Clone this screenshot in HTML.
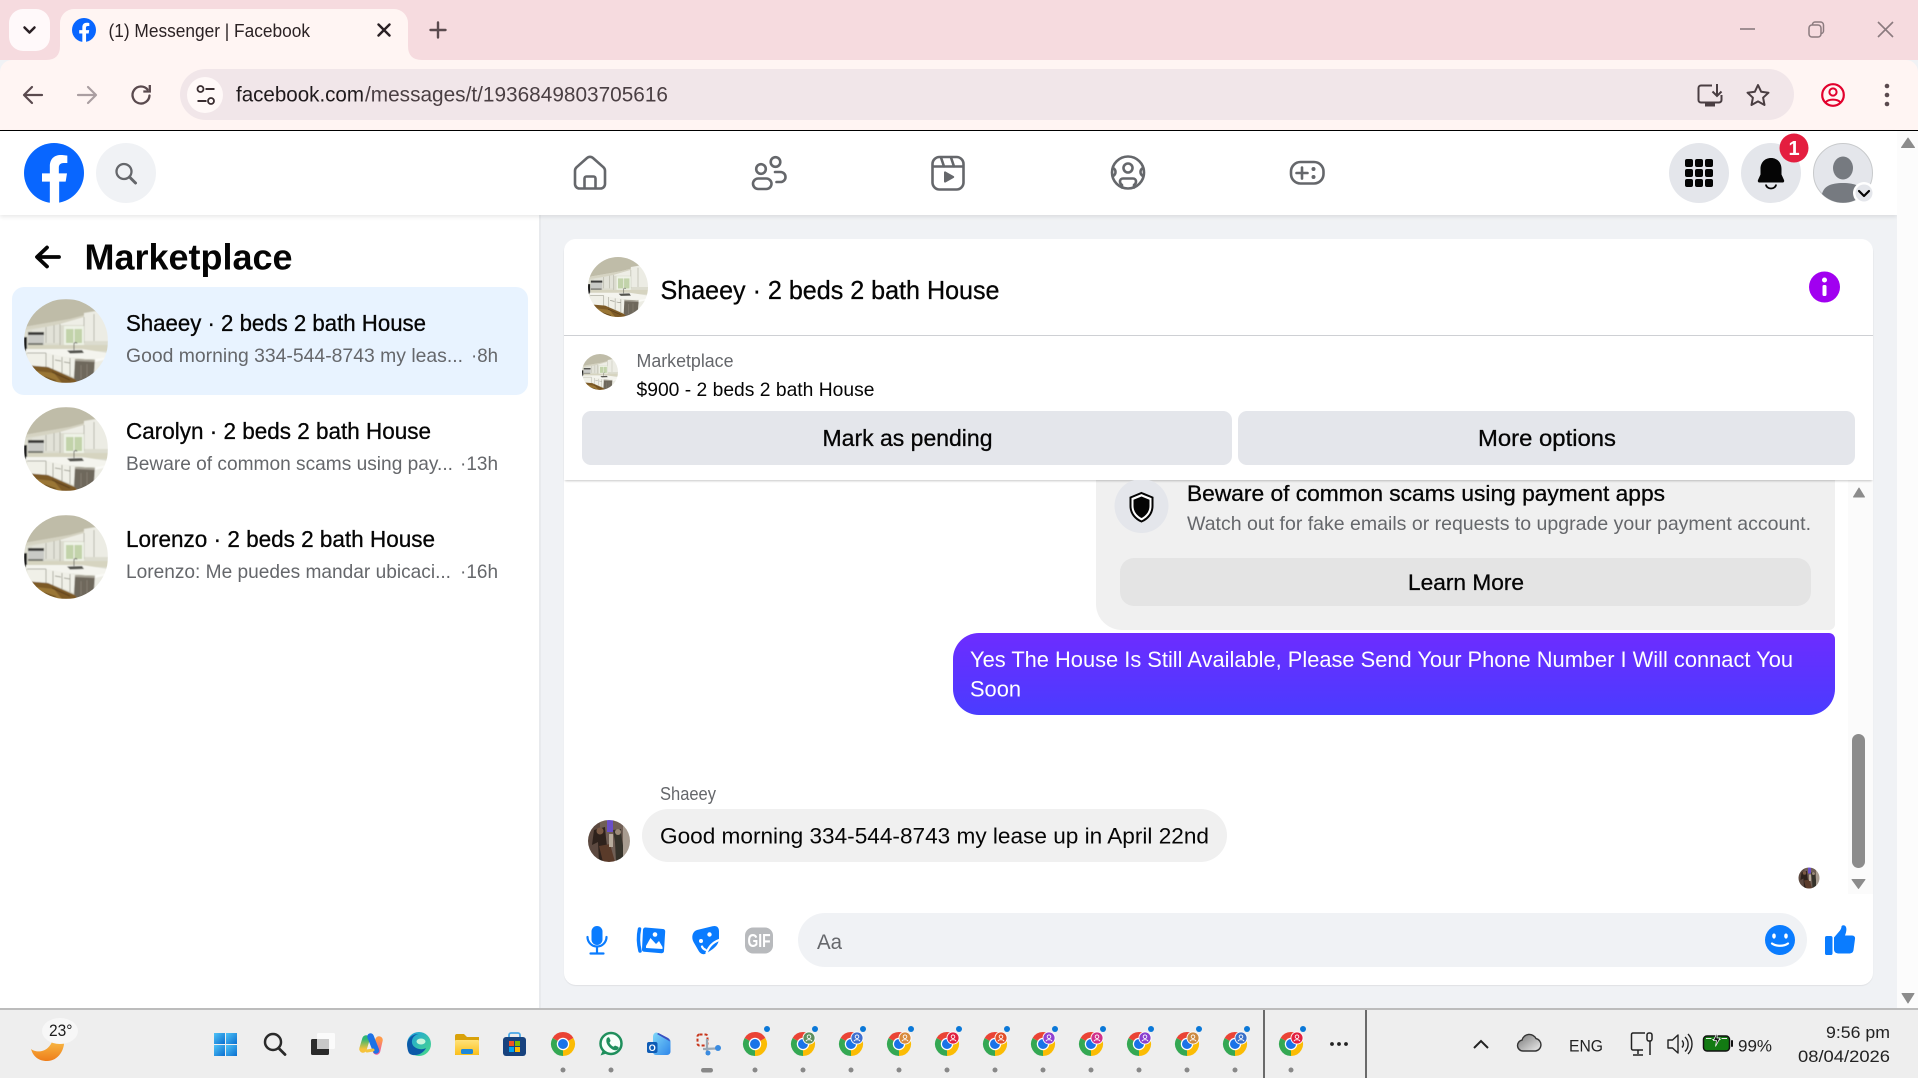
<!DOCTYPE html>
<html lang="en">
<head>
<meta charset="utf-8">
<title>(1) Messenger | Facebook</title>
<style>
html,body{margin:0;padding:0;width:1918px;height:1078px;overflow:hidden;background:#f0f2f5;font-family:"Liberation Sans",sans-serif}
div,header,aside,main,nav,footer{position:absolute;box-sizing:border-box}
#tabstrip{left:0;top:0;width:1918px;height:60px;background:#f6dbdf}
#toolbar{left:0;top:60px;width:1918px;height:70px;background:#fff5f3;border-radius:12px 12px 0 0}
#address{left:180px;top:69px;width:1614px;height:51px;background:#f1e6e9;border-radius:26px}
#blackline{left:0;top:130px;width:1918px;height:1px;background:#000}
#fbbar{left:0;top:131px;width:1897px;height:84px;background:#fff;box-shadow:0 2px 4px rgba(0,0,0,.09);z-index:3}
#sidebar{left:0;top:215px;width:541px;height:793px;background:#fff;border-right:2px solid #e8eaed}
#row1{left:12px;top:287px;width:516px;height:108px;background:#e8f3ff;border-radius:12px}
#pagescroll{left:1897px;top:131px;width:21px;height:877px;background:#fcfcfc;z-index:4}
#card{left:564px;top:239px;width:1309px;height:746px;background:#fff;border-radius:12px;box-shadow:0 1px 1px rgba(0,0,0,.07)}
#threadhead{left:564px;top:239px;width:1309px;height:241px;background:#fff;border-radius:12px 12px 0 0;box-shadow:0 2px 2px -1px rgba(0,0,0,.22);z-index:2}
#divider{left:564px;top:335px;width:1309px;height:1px;background:#ced0d4;z-index:3}
.btn{background:#e4e6eb;border-radius:9px;height:54px;top:411px;z-index:3}
#scam{left:1096px;top:480px;width:739px;height:150px;background:#f0f0f0;border-radius:0 0 6px 26px}
#learn{left:1120px;top:558px;width:691px;height:48px;background:#e4e4e4;border-radius:14px}
#mine{left:953px;top:633px;width:882px;height:82px;background:linear-gradient(#6d2cff,#4a3cff);border-radius:26px 6px 26px 26px}
#theirs{left:642px;top:809px;width:585px;height:53px;background:#f0f0f0;border-radius:27px}
#innerscroll{left:1848px;top:480px;width:25px;height:414px;background:#fbfbfb}
#thumb{left:1852px;top:734px;width:13px;height:134px;background:#8c8c8c;border-radius:7px}
#compose{left:798px;top:913px;width:1009px;height:54px;background:#f0f2f5;border-radius:27px}
#taskbar{left:0;top:1008px;width:1918px;height:70px;background:#eeeeee;border-top:2px solid #bcbcbc;z-index:4}
#overlay{position:absolute;left:0;top:0;z-index:5}
</style>
</head>
<body>
<div id="tabstrip"></div>
<div id="toolbar"></div>
<div id="address"></div>
<div id="blackline"></div>
<header id="fbbar"></header>
<aside id="sidebar"></aside>
<div id="row1"></div>
<div id="pagescroll"></div>
<main id="card"></main>
<div id="scam"></div>
<div id="learn"></div>
<div id="mine"></div>
<div id="theirs"></div>
<div id="innerscroll"></div>
<div id="thumb"></div>
<div id="compose"></div>
<div id="threadhead"></div>
<div id="divider"></div>
<div class="btn" style="left:582px;width:650px"></div>
<div class="btn" style="left:1238px;width:617px"></div>
<footer id="taskbar"></footer>

<svg id="overlay" width="1918" height="1078" viewBox="0 0 1918 1078" xmlns="http://www.w3.org/2000/svg" font-family="'Liberation Sans',sans-serif">
<defs>
  <linearGradient id="gWin" x1="0" y1="0" x2="1" y2="1"><stop offset="0" stop-color="#4fc3f7"/><stop offset="1" stop-color="#0a6fd0"/></linearGradient>
  <linearGradient id="gSun" x1="0" y1="0" x2="0" y2="1"><stop offset="0" stop-color="#fbc84f"/><stop offset="1" stop-color="#ee7d1a"/></linearGradient>
  <linearGradient id="gFold" x1="0" y1="0" x2="0" y2="1"><stop offset="0" stop-color="#ffe27a"/><stop offset="1" stop-color="#fbbf1a"/></linearGradient>
  <linearGradient id="gEdge" x1="0" y1="0" x2="1" y2="1"><stop offset="0" stop-color="#1b9de2"/><stop offset="1" stop-color="#4bdc86"/></linearGradient>
  <linearGradient id="gCloud" x1="0" y1="0" x2="1" y2="1"><stop offset="0" stop-color="#777"/><stop offset="1" stop-color="#eee"/></linearGradient>
  <linearGradient id="gOut" x1="0" y1="0" x2="1" y2="1"><stop offset="0" stop-color="#7fd8f8"/><stop offset="1" stop-color="#2f86ea"/></linearGradient>
  <linearGradient id="gCopL" x1="0" y1="0" x2="0" y2="1"><stop offset="0" stop-color="#2fb673"/><stop offset="1" stop-color="#f6c23a"/></linearGradient>
  <linearGradient id="gCopR" x1="0" y1="0" x2="0" y2="1"><stop offset="0" stop-color="#ff9a4a"/><stop offset="1" stop-color="#ee5f9a"/></linearGradient>
  <filter id="b1" x="-5%" y="-5%" width="110%" height="110%"><feGaussianBlur stdDeviation=".45"/></filter>
  <clipPath id="c84"><circle cx="42" cy="42" r="42"/></clipPath>
  <clipPath id="cShield"><rect x="1100" y="480" width="100" height="70"/></clipPath>

  <symbol id="kitchen" viewBox="0 0 84 84" overflow="hidden">
    <g clip-path="url(#c84)"><g filter="url(#b1)">
      <rect width="84" height="84" fill="#dcdccf"/>
      <!-- ceiling -->
      <path d="M0 0H84V10L46 20L0 28Z" fill="#bfbca8"/>
      <path d="M0 28L46 20L84 10V14L46 24L0 31Z" fill="#d5d3c2"/>
      <!-- upper cabinets -->
      <path d="M8 31L36 25V44H8Z" fill="#e2e2d8"/>
      <path d="M60 14L84 10V42H60Z" fill="#ecece4"/>
      <path d="M36 25L60 18V26H36Z" fill="#eeeee6"/>
      <path d="M22 28V44M30 26V44M36 25V46M60 18V44M70 15V42" stroke="#b5b5a8" stroke-width=".9"/>
      <!-- window -->
      <rect x="40" y="27" width="20" height="19" fill="#eef2e6"/>
      <path d="M42 30h16v14h-16Z" fill="#c2d3aa"/>
      <path d="M50 28v18" stroke="#f2f2ea" stroke-width="1"/>
      <!-- hood + range -->
      <rect x="4" y="33" width="16" height="3" fill="#3c3c3a"/>
      <rect x="4" y="36" width="16" height="10" fill="#c9cac6"/>
      <rect x="4" y="44" width="15" height="2" fill="#77776f"/>
      <rect x="0" y="38" width="3" height="14" fill="#1c1c1c"/>
      <!-- backsplash / counter -->
      <path d="M4 46H84V52H60L4 50Z" fill="#d6d4c0"/>
      <path d="M2 50L58 50L84 54V60L62 60L2 54Z" fill="#f4f4ee"/>
      <path d="M43 51.500L58 51L60 54L46 54.500Z" fill="#55554f"/>
      <path d="M50 51V44.500q2-2 3 0" fill="none" stroke="#6a6a64" stroke-width=".9"/>
      <!-- lower cabinets -->
      <path d="M3 54L22 54L54 60L50 78L24 68L3 68Z" fill="#f0f0e8"/>
      <path d="M3 54H22" stroke="#9c9c90" stroke-width=".8"/>
      <path d="M22 54V68M29 56V71M38 58V74M46 59V77" stroke="#a8a89c" stroke-width=".9"/>
      <path d="M31 61L37 62M40 63L46 64" stroke="#88887c" stroke-width=".8"/>
      <!-- floor -->
      <path d="M0 66L24 68L60 84H0Z" fill="#7d5a28"/>
      <path d="M12 72L30 74L38 84H14Z" fill="#9a7636"/>
      <path d="M28 73L46 81M20 78L32 82" stroke="#5a3f1a" stroke-width="1"/>
      <!-- dishwasher -->
      <path d="M51 60L71 61L70 76L54 84L50 79Z" fill="#6e675c"/>
      <path d="M51 60L71 61L71 63L51 62Z" fill="#a8a498"/>
      <path d="M57 66V80M63 65V78" stroke="#8a8477" stroke-width=".8"/>
      <!-- right end -->
      <path d="M71 60L84 58V84H62L70 76Z" fill="#ecece4"/>
      <path d="M71 60L84 58V60L71 63Z" fill="#fafaf6"/>
    </g></g>
  </symbol>

  <symbol id="person" viewBox="0 0 84 84" overflow="hidden">
    <g clip-path="url(#c84)"><g filter="url(#b1)">
      <rect width="84" height="84" fill="#6f5f55"/>
      <rect x="0" y="0" width="24" height="84" fill="#5b4a40"/>
      <rect x="38" y="0" width="12" height="24" fill="#6a50c8"/>
      <path d="M12 20L34 14L36 36L42 84H22L20 44L8 50Z" fill="#2e211b"/>
      <path d="M22 52L44 48L54 84H30Z" fill="#5a3a2c"/>
      <path d="M50 20L66 18L68 40L76 84H56L54 44Z" fill="#36302a"/>
      <circle cx="24" cy="22" r="7" fill="#7a5a45"/>
      <circle cx="60" cy="24" r="6" fill="#9a8a78"/>
      <rect x="70" y="8" width="14" height="76" fill="#a89c90"/>
      <rect x="42" y="28" width="8" height="26" fill="#b8ac9c"/>
    </g></g>
  </symbol>

  <symbol id="fb" viewBox="0 0 36 36">
    <circle cx="18" cy="18" r="18" fill="#0866ff"/>
    <path d="M25 23.2l.8-5H20.9v-3.4c0-1.5.7-2.8 3-2.8h2.1V7.6s-1.9-.4-3.8-.4c-4.1 0-6.7 2.4-6.7 6.8v4.2h-4.7v5h4.7V36h5.6V23.2z" fill="#fff"/>
  </symbol>

  <g id="chrome">
    <path d="M0 0L-10.4 -6A12 12 0 0 1 10.4 -6Z" fill="#ea4335"/>
    <path d="M0 0L10.4 -6A12 12 0 0 1 0 12Z" fill="#fbbc04"/>
    <path d="M0 0L0 12A12 12 0 0 1 -10.4 -6Z" fill="#34a853"/>
    <circle r="6.200" fill="#fff"/><circle r="5" fill="#1a73e8"/>
  </g>
  <g id="pb">
    <circle r="6.5" fill="#fff"/><circle r="5.6" fill="currentColor"/>
    <circle cy="-1.3" r="1.8" fill="none" stroke="#fff" stroke-width=".9"/>
    <path d="M-3 3.2C-2.4 1.2 2.4 1.2 3 3.2" fill="none" stroke="#fff" stroke-width=".9"/>
  </g>
</defs>

<!-- browser tab strip -->
<rect x="9" y="9" width="41" height="42" rx="14" fill="#fff9fa"/>
<path d="M24.500 27.500l5 5 5-5" fill="none" stroke="#2a2024" stroke-width="2.500" stroke-linecap="round" stroke-linejoin="round"/>
<path d="M46 60q14 0 14-14V23a14 14 0 0 1 14-14H394a14 14 0 0 1 14 14V46q0 14 14 14Z" fill="#fff5f3"/>
<use href="#fb" x="72" y="18" width="24" height="24"/>
<text x="108.500" y="37" font-size="18" fill="#2b2224" textLength="201.500" lengthAdjust="spacingAndGlyphs">(1) Messenger | Facebook</text>
<path d="M378.500 24.500l11 11m0-11l-11 11" stroke="#2a2024" stroke-width="2.400" stroke-linecap="round"/>
<path d="M438 22.500v15m-7.500-7.500h15" stroke="#5a4a4e" stroke-width="2.400" stroke-linecap="round"/>
<path d="M1740 29h15" stroke="#8b7b7f" stroke-width="1.600"/>
<rect x="1809" y="25" width="12" height="12" rx="3" fill="none" stroke="#8b7b7f" stroke-width="1.500"/>
<path d="M1812.500 25v-.5a2.500 2.500 0 0 1 2.500-2.500h5.500a3 3 0 0 1 3 3v6a2.500 2.500 0 0 1-2.500 2.500" fill="none" stroke="#8b7b7f" stroke-width="1.500"/>
<path d="M1878 22l15 15m0-15l-15 15" stroke="#8b7b7f" stroke-width="1.600"/>

<!-- toolbar -->
<path d="M42 95H25m7-8l-8 8 8 8" fill="none" stroke="#5a4a4e" stroke-width="2.200" stroke-linecap="round" stroke-linejoin="round"/>
<path d="M78 95H95m-7-8l8 8-8 8" fill="none" stroke="#aa9ea1" stroke-width="2.200" stroke-linecap="round" stroke-linejoin="round"/>
<path d="M147.500 89.500a8.500 8.500 0 1 0 2 6" fill="none" stroke="#5a4a4e" stroke-width="2.300" stroke-linecap="round"/>
<path d="M149.800 85v6.500h-6.500" fill="none" stroke="#5a4a4e" stroke-width="2.300"/>
<circle cx="205" cy="95" r="18" fill="#fff9f8"/>
<circle cx="200.500" cy="89" r="3" fill="none" stroke="#3a2e31" stroke-width="1.800"/>
<path d="M205.500 89h9" stroke="#3a2e31" stroke-width="2"/>
<circle cx="211" cy="101" r="3" fill="none" stroke="#3a2e31" stroke-width="1.800"/>
<path d="M197.500 101h9" stroke="#3a2e31" stroke-width="2"/>
<text x="236" y="101.500" font-size="21" fill="#1f1a1c" textLength="128" lengthAdjust="spacingAndGlyphs">facebook.com</text>
<text x="365" y="101.500" font-size="21" fill="#4a3f43" textLength="303" lengthAdjust="spacingAndGlyphs">/messages/t/1936849803705616</text>
<path d="M1712 85.500h-11a2.500 2.500 0 0 0-2.500 2.500v12a2.500 2.500 0 0 0 2.500 2.500h18a2.500 2.500 0 0 0 2.500-2.500v-5" fill="none" stroke="#4a3e42" stroke-width="2"/>
<path d="M1705 105h10" stroke="#4a3e42" stroke-width="3"/>
<path d="M1717 84v12m-4.500-4.500l4.500 4.500 4.500-4.500" fill="none" stroke="#4a3e42" stroke-width="2"/>
<path d="M1758 85l3.200 6.800 7.300.9-5.400 5 1.400 7.300-6.500-3.600-6.500 3.600 1.400-7.300-5.400-5 7.300-.9Z" fill="none" stroke="#4a3e42" stroke-width="2" stroke-linejoin="round"/>
<circle cx="1833" cy="95" r="10.800" fill="none" stroke="#e2002c" stroke-width="2.200"/>
<circle cx="1833" cy="92" r="3.600" fill="none" stroke="#e2002c" stroke-width="2"/>
<path d="M1825.500 102.500c3-3.800 12-3.800 15 0" fill="none" stroke="#e2002c" stroke-width="2"/>
<circle cx="1887" cy="86" r="2.300" fill="#5a4a4e"/><circle cx="1887" cy="95" r="2.300" fill="#5a4a4e"/><circle cx="1887" cy="104" r="2.300" fill="#5a4a4e"/>

<!-- fb top bar -->
<use href="#fb" x="24" y="143" width="60" height="60"/>
<circle cx="126" cy="173" r="30" fill="#f0f2f5"/>
<circle cx="124" cy="171.500" r="7.500" fill="none" stroke="#65676b" stroke-width="2.300"/>
<path d="M129.500 177l6 6" stroke="#65676b" stroke-width="3" stroke-linecap="round"/>

<g fill="none" stroke="#65676b" stroke-width="2.600" stroke-linecap="round" stroke-linejoin="round">
  <path d="M587 158l-10.500 9.300a5 5 0 0 0-1.500 3.500V184a4.500 4.500 0 0 0 4.500 4.500h21a4.500 4.500 0 0 0 4.500-4.500v-13.200a5 5 0 0 0-1.500-3.500L593 158a4.500 4.500 0 0 0-6 0Z"/>
  <path d="M584.500 188v-9.500a2 2 0 0 1 2-2h7a2 2 0 0 1 2 2V188"/>
  <circle cx="761" cy="169" r="4.800"/>
  <rect x="753" y="178.500" width="18.500" height="10.500" rx="5.200"/>
  <circle cx="775.500" cy="162" r="4.800"/>
  <path d="M775 172h5.500a4.800 4.800 0 0 1 0 10h-4"/>
  <rect x="932.500" y="157" width="31" height="32.500" rx="7"/>
  <path d="M933 166.500h30M941 157.500l3 9M951 157.500l3 9"/>
  <circle cx="1128" cy="172.500" r="16"/>
  <circle cx="1128" cy="168" r="4.500"/>
  <path d="M1122 187.500v-2.500c-1.500-1-2-2-2-3.500 0-1.800 1.500-3 3-3h10c1.500 0 3 1.200 3 3 0 1.500-.5 2.500-2 3.500v2.500"/>
  <path d="M1113 168a4.500 4.500 0 0 1 2.500 4 4.500 4.500 0 0 1-2.500 4M1143 168a4.500 4.500 0 0 0-2.500 4 4.500 4.500 0 0 0 2.500 4"/>
  <rect x="1291" y="162" width="32.500" height="21.500" rx="9.500"/>
  <path d="M1302 167.500v11M1296.500 173h11"/>
</g>
<path d="M944 172.500c0-1 .9-1.400 1.700-.9l8 4.500c.7.400.7 1.400 0 1.800l-8 4.500c-.8.500-1.700 0-1.700-.9Z" fill="#65676b"/>
<circle cx="1313.500" cy="169" r="2" fill="#65676b"/><circle cx="1313.500" cy="177" r="2" fill="#65676b"/>

<circle cx="1699" cy="173" r="30" fill="#e4e6eb"/>
<g fill="#050505">
  <rect x="1685" y="159" width="8" height="8" rx="2"/><rect x="1695" y="159" width="8" height="8" rx="2"/><rect x="1705" y="159" width="8" height="8" rx="2"/>
  <rect x="1685" y="169" width="8" height="8" rx="2"/><rect x="1695" y="169" width="8" height="8" rx="2"/><rect x="1705" y="169" width="8" height="8" rx="2"/>
  <rect x="1685" y="179" width="8" height="8" rx="2"/><rect x="1695" y="179" width="8" height="8" rx="2"/><rect x="1705" y="179" width="8" height="8" rx="2"/>
</g>
<circle cx="1771" cy="173" r="30" fill="#e4e6eb"/>
<path d="M1771 158c-6.500 0-10.500 4.800-10.500 11v5.500l-2.500 5.500c-.6 1.500.2 2.500 1.700 2.500h22.600c1.500 0 2.300-1 1.700-2.500l-2.500-5.500V169c0-6.200-4-11-10.500-11Z" fill="#050505"/>
<path d="M1766 184.500a5 4 0 0 0 10 0" fill="none" stroke="#050505" stroke-width="1.800"/>
<circle cx="1794" cy="148" r="14.500" fill="#e41e3f"/>
<text x="1794" y="155" font-size="20" font-weight="bold" fill="#fff" text-anchor="middle">1</text>
<circle cx="1843" cy="173" r="29.500" fill="#e4e6eb" stroke="#c8cacc" stroke-width="1"/>
<ellipse cx="1843" cy="168" rx="10" ry="11.500" fill="#767a80"/>
<path d="M1822 194c2-8 9-11 21-11s19 3 21 11a29.500 29.500 0 0 1-42 0Z" fill="#767a80"/>
<circle cx="1864" cy="193" r="11" fill="#fff"/><circle cx="1864" cy="193" r="8.500" fill="#e4e6eb"/>
<path d="M1859 191l5 5 5-5" fill="none" stroke="#050505" stroke-width="2.200" stroke-linecap="round" stroke-linejoin="round"/>
<path d="M1908 138l6.500 9.500h-13Z" fill="#8c8c8c" stroke="#8c8c8c" stroke-linejoin="round"/>
<path d="M1908 1003l6-9.500h-12Z" fill="#8c8c8c" stroke="#8c8c8c" stroke-linejoin="round"/>

<!-- sidebar -->
<path d="M59 257H37.500M47 247.500L37 257l10 9.500" fill="none" stroke="#050505" stroke-width="3.800" stroke-linecap="round" stroke-linejoin="round"/>
<text x="84.500" y="269.500" font-size="36" font-weight="bold" fill="#050505" textLength="208" lengthAdjust="spacingAndGlyphs">Marketplace</text>

<use href="#kitchen" x="24" y="299" width="84" height="84"/>
<use href="#kitchen" x="24" y="407" width="84" height="84"/>
<use href="#kitchen" x="24" y="515" width="84" height="84"/>

<g fill="#050505" font-size="23" stroke="#050505" stroke-width=".3">
  <text x="126" y="331" textLength="300" lengthAdjust="spacingAndGlyphs">Shaeey · 2 beds 2 bath House</text>
  <text x="126" y="439" textLength="305" lengthAdjust="spacingAndGlyphs">Carolyn · 2 beds 2 bath House</text>
  <text x="126" y="547" textLength="309" lengthAdjust="spacingAndGlyphs">Lorenzo · 2 beds 2 bath House</text>
</g>
<g fill="#65676b" font-size="19.500">
  <text x="126" y="362" textLength="337" lengthAdjust="spacingAndGlyphs">Good morning 334-544-8743 my leas...</text>
  <text x="471" y="362" textLength="27" lengthAdjust="spacingAndGlyphs">·8h</text>
  <text x="126" y="470" textLength="327" lengthAdjust="spacingAndGlyphs">Beware of common scams using pay...</text>
  <text x="460" y="470" textLength="38" lengthAdjust="spacingAndGlyphs">·13h</text>
  <text x="126" y="578" textLength="325" lengthAdjust="spacingAndGlyphs">Lorenzo: Me puedes mandar ubicaci...</text>
  <text x="460" y="578" textLength="38" lengthAdjust="spacingAndGlyphs">·16h</text>
</g>

<!-- thread header -->
<use href="#kitchen" x="588" y="257" width="60" height="60"/>
<text x="660.500" y="299" font-size="26" fill="#050505" stroke="#050505" stroke-width=".3" textLength="339" lengthAdjust="spacingAndGlyphs">Shaeey · 2 beds 2 bath House</text>
<circle cx="1824.500" cy="287" r="15.500" fill="#a100f0"/>
<circle cx="1824.500" cy="280" r="2.500" fill="#fff"/>
<rect x="1822.500" y="285" width="4" height="11" rx="1.500" fill="#fff"/>
<use href="#kitchen" x="582" y="354" width="36" height="36"/>
<text x="636.500" y="367" font-size="18" fill="#65676b" textLength="97" lengthAdjust="spacingAndGlyphs">Marketplace</text>
<text x="636.500" y="396" font-size="19.500" fill="#050505" textLength="238" lengthAdjust="spacingAndGlyphs">$900 - 2 beds 2 bath House</text>
<text x="822.500" y="446" font-size="23" fill="#050505" stroke="#050505" stroke-width=".3" textLength="170" lengthAdjust="spacingAndGlyphs">Mark as pending</text>
<text x="1478" y="446" font-size="23" fill="#050505" stroke="#050505" stroke-width=".3" textLength="138" lengthAdjust="spacingAndGlyphs">More options</text>

<!-- scam notice -->
<circle cx="1141.500" cy="506" r="27" fill="#e4e6eb" clip-path="url(#cShield)"/>
<path d="M1141.500 493l11 4.500v8.500c0 7.500-5 13-11 15.500-6-2.500-11-8-11-15.500v-8.500Z" fill="#fff" stroke="#050505" stroke-width="2"/>
<path d="M1141.500 496.500l8 3.200v6.300c0 5.500-3.500 9.800-8 12-4.500-2.200-8-6.500-8-12v-6.300Z" fill="#050505"/>
<text x="1187" y="501" font-size="22.500" fill="#050505" stroke="#050505" stroke-width=".3" textLength="478" lengthAdjust="spacingAndGlyphs">Beware of common scams using payment apps</text>
<text x="1187" y="530" font-size="19.500" fill="#65676b" textLength="624" lengthAdjust="spacingAndGlyphs">Watch out for fake emails or requests to upgrade your payment account.</text>
<text x="1408" y="590" font-size="22.500" fill="#050505" stroke="#050505" stroke-width=".3" textLength="116" lengthAdjust="spacingAndGlyphs">Learn More</text>

<!-- messages -->
<text x="970" y="667" font-size="22.500" fill="#fff" textLength="823" lengthAdjust="spacingAndGlyphs">Yes The House Is Still Available, Please Send Your Phone Number I Will connact You</text>
<text x="970" y="696.500" font-size="22.500" fill="#fff" textLength="51" lengthAdjust="spacingAndGlyphs">Soon</text>
<text x="660" y="800" font-size="18" fill="#65676b" textLength="56" lengthAdjust="spacingAndGlyphs">Shaeey</text>
<use href="#person" x="588" y="820" width="42" height="42"/>
<text x="660" y="843.500" font-size="22.500" fill="#050505" textLength="549" lengthAdjust="spacingAndGlyphs">Good morning 334-544-8743 my lease up in April 22nd</text>
<use href="#person" x="1798.500" y="867.500" width="21" height="21"/>
<path d="M1859 488l5.500 9h-11Z" fill="#8c8c8c" stroke="#8c8c8c" stroke-linejoin="round"/>
<path d="M1858.500 888.500l6.500-9h-13Z" fill="#8c8c8c" stroke="#8c8c8c" stroke-linejoin="round"/>

<!-- composer -->
<rect x="591.500" y="926" width="11" height="19" rx="5.500" fill="#0a7cff"/>
<path d="M587.500 937a9.500 9.500 0 0 0 19 0M597 947v6M590.500 953.500h13" fill="none" stroke="#0a7cff" stroke-width="2.200" stroke-linecap="round"/>
<path d="M639.500 929c-1.500 7-1.500 14 .5 22" fill="none" stroke="#0a7cff" stroke-width="3.500" stroke-linecap="round"/>
<path d="M645.500 927.500l17.500 1.500c1.500.2 2.300 1.200 2.200 2.500l-1.200 19.500c-.1 1.500-1.200 2.300-2.500 2.200l-17.500-1.500c-1.300-.1-2.200-1.200-2-2.500l1-19.500c.1-1.300 1.200-2.300 2.500-2.200Z" fill="#0a7cff"/>
<circle cx="655" cy="934.500" r="2.300" fill="#fff"/>
<path d="M646 946l4.500-8 5.500 6 3-3 3.500 6v2L646 948Z" fill="#fff"/>
<path d="M697 930l15.500-3.800c4-1 6.500 1 6.500 5v7c0 5-3 8.500-6.500 11l-5.500 3.800c-3 2-6 1.500-8-1.500l-5.500-9.500c-2.500-5-1-10.500 3.500-12Z" fill="#0a7cff"/>
<circle cx="709.500" cy="934.500" r="2.200" fill="#fff"/>
<circle cx="701" cy="941" r="2" fill="#fff"/>
<path d="M702 946.500c.8 1.800 2 2.800 3.500 3.300M706.500 953c2-6 6-10.500 12.500-13" fill="none" stroke="#fff" stroke-width="2.200" stroke-linecap="round"/>
<rect x="745" y="927.500" width="28" height="26" rx="8" fill="#b8babd"/>
<text x="759" y="947" font-size="18" font-weight="bold" fill="#fff" text-anchor="middle" textLength="23" lengthAdjust="spacingAndGlyphs">GIF</text>
<text x="817" y="949" font-size="21" fill="#65676b" textLength="25" lengthAdjust="spacingAndGlyphs">Aa</text>
<circle cx="1780" cy="940" r="15" fill="#0a7cff"/>
<ellipse cx="1774" cy="936" rx="1.800" ry="2.600" fill="#fff"/><ellipse cx="1786" cy="936" rx="1.800" ry="2.600" fill="#fff"/>
<path d="M1772 943.500c4 3 12 3 16 0" fill="none" stroke="#fff" stroke-width="2.200" stroke-linecap="round"/>
<rect x="1825" y="936" width="7.500" height="19" rx="1.800" fill="#0a7cff"/>
<path d="M1834 937.500l6-7c1-1.500 1.500-3 1.500-4 .2-1.500 3-1.800 4.200 0 1.200 2 .8 5-.7 9h7c2 0 3.500 1.500 3 3.500l-1.500 11c-.4 2.500-2 3.500-4.500 3.500h-10.500c-2.700 0-4.500-1.800-4.500-4Z" fill="#0a7cff"/>

<!-- taskbar -->
<path d="M31 1049C36 1053 50 1054 54 1036L64 1036C66 1050 58 1061 47 1061C38 1061 33 1056 31 1049Z" fill="url(#gSun)"/>
<ellipse cx="60" cy="1031" rx="18" ry="13" fill="#f7f7f7"/>
<text x="49" y="1036" font-size="17" fill="#1c1c1c" textLength="23.500" lengthAdjust="spacingAndGlyphs">23°</text>

<g fill="url(#gWin)"><rect x="214" y="1033" width="11" height="11"/><rect x="226" y="1033" width="11" height="11"/><rect x="214" y="1045" width="11" height="11"/><rect x="226" y="1045" width="11" height="11"/></g>
<circle cx="273" cy="1042" r="8" fill="none" stroke="#2a2a2a" stroke-width="2.500"/>
<path d="M279 1048.500l6 6" stroke="#2a2a2a" stroke-width="2.800" stroke-linecap="round"/>
<rect x="317" y="1033" width="18" height="16" rx="1.500" fill="#fbfbfb"/>
<rect x="311" y="1039" width="18" height="16" rx="1.500" fill="#2a2a2a"/>
<rect x="317" y="1039" width="12" height="10" fill="#c8c8c8"/>
<!-- copilot -->
<g fill="none" stroke-linecap="round">
  <path d="M366 1039l-3 10" stroke="url(#gCopL)" stroke-width="7.500"/>
  <path d="M379 1040l-2.500 11" stroke="url(#gCopR)" stroke-width="7.500"/>
  <path d="M370.500 1036.500l5.500 14" stroke="#1e72e6" stroke-width="6.500"/>
  <path d="M367 1051l6-1" stroke="#f4c43c" stroke-width="3"/>
</g>
<!-- edge -->
<circle cx="419" cy="1044" r="12" fill="url(#gEdge)"/>
<path d="M407.200 1046c-.6-6.500 4.300-12 11.300-12-6.500 1.500-8.500 8.500-4.500 12.500 3 3 8.500 3.500 12 1.500-3 6-11 9-16 6-1.500-1-2.500-4-2.800-8Z" fill="#0c59a8"/>
<ellipse cx="421" cy="1041.500" rx="4.500" ry="3" fill="#c8f5dc"/>
<path d="M455 1036a2 2 0 0 1 2-2h7l3 3h12v18h-24Z" fill="#d9a20a"/>
<rect x="455" y="1040" width="24" height="15" rx="1" fill="url(#gFold)"/>
<rect x="461" y="1049" width="12" height="5" rx="1.500" fill="#1e88d8"/>
<path d="M509 1037v-2a2 2 0 0 1 2-2h7a2 2 0 0 1 2 2v2" fill="none" stroke="#4aa8e8" stroke-width="1.800"/>
<rect x="503" y="1037" width="23" height="19" rx="3" fill="#17427e"/>
<rect x="509" y="1041" width="5" height="5" fill="#f25022"/><rect x="515" y="1041" width="5" height="5" fill="#7fba00"/><rect x="509" y="1047" width="5" height="5" fill="#00a4ef"/><rect x="515" y="1047" width="5" height="5" fill="#ffb900"/>
<use href="#chrome" x="563" y="1044"/>
<circle cx="611" cy="1043.500" r="10.500" fill="#f6fff9" stroke="#1f8f5c" stroke-width="2.500"/>
<path d="M603 1050l-2.500 5.500 6-2Z" fill="#1f8f5c"/>
<path d="M607 1038c1-1 2-1 2.500 0l1 2.500c.2.800-.8 1.500-1 2.200.8 1.800 2 3 4 4 .7-.2 1.200-1.300 2-1l2.500 1c1 .5.800 1.700 0 2.500-2 2-5.500 1-8.500-2-3-3-4-6.500-2.500-9.200Z" fill="#1f8f5c"/>
<path d="M658 1033l10 5c1.500.8 2.500 2 2.500 3.500v10c0 2-1.500 3.500-3.500 3.500h-11c-2 0-3-1.500-3-3.500v-14.500c0-3.500 2.500-5.500 5-4Z" fill="url(#gOut)"/>
<path d="M657 1034l13 7.500c-.3-1.800-1-3-2.500-3.700l-9-4.800Z" fill="#3a4fc0"/>
<rect x="647" y="1042" width="10.500" height="11" rx="2" fill="#0f5cb5"/>
<text x="652.300" y="1051" font-size="9" font-weight="bold" fill="#fff" text-anchor="middle">O</text>
<rect x="697.500" y="1034.500" width="10" height="11" rx="2" fill="none" stroke="#c8341a" stroke-width="2" stroke-dasharray="3 2"/>
<path d="M703 1049l13-.5M707 1039v16" stroke="#9aa8b5" stroke-width="2.200"/>
<circle cx="718" cy="1048" r="3" fill="#3a8be0"/><circle cx="708" cy="1053" r="2.500" fill="#3a8be0"/>

<g fill="#888">
  <circle cx="563" cy="1070" r="2.500"/><circle cx="611" cy="1070" r="2.500"/><rect x="701" y="1068" width="12" height="4.500" rx="2.200"/>
  <circle cx="755" cy="1070" r="2.500"/><circle cx="803" cy="1070" r="2.500"/><circle cx="851" cy="1070" r="2.500"/><circle cx="899" cy="1070" r="2.500"/><circle cx="947" cy="1070" r="2.500"/><circle cx="995" cy="1070" r="2.500"/><circle cx="1043" cy="1070" r="2.500"/><circle cx="1091" cy="1070" r="2.500"/><circle cx="1139" cy="1070" r="2.500"/><circle cx="1187" cy="1070" r="2.500"/><circle cx="1235" cy="1070" r="2.500"/><circle cx="1291" cy="1070" r="2.500"/>
</g>
<use href="#chrome" x="755" y="1044"/>
<use href="#chrome" x="803" y="1044"/><use href="#pb" x="809" y="1038" style="color:#5e8f5e"/>
<use href="#chrome" x="851" y="1044"/><use href="#pb" x="857" y="1038" style="color:#3f6fd0"/>
<use href="#chrome" x="899" y="1044"/><use href="#pb" x="905" y="1038" style="color:#d98a3d"/>
<use href="#chrome" x="947" y="1044"/><use href="#pb" x="953" y="1038" style="color:#e2203f"/>
<use href="#chrome" x="995" y="1044"/><use href="#pb" x="1001" y="1038" style="color:#e2502a"/>
<use href="#chrome" x="1043" y="1044"/><use href="#pb" x="1049" y="1038" style="color:#9040d0"/>
<use href="#chrome" x="1091" y="1044"/><use href="#pb" x="1097" y="1038" style="color:#d0308a"/>
<use href="#chrome" x="1139" y="1044"/><use href="#pb" x="1145" y="1038" style="color:#8a40d0"/>
<use href="#chrome" x="1187" y="1044"/><use href="#pb" x="1193" y="1038" style="color:#cc8a40"/>
<use href="#chrome" x="1235" y="1044"/><use href="#pb" x="1241" y="1038" style="color:#3a70c8"/>
<use href="#chrome" x="1291" y="1044"/><use href="#pb" x="1297" y="1038" style="color:#e2203f"/>
<g fill="#0a78d8">
  <circle cx="767" cy="1029" r="3"/><circle cx="815" cy="1029" r="3"/><circle cx="863" cy="1029" r="3"/><circle cx="911" cy="1029" r="3"/><circle cx="959" cy="1029" r="3"/><circle cx="1007" cy="1029" r="3"/><circle cx="1055" cy="1029" r="3"/><circle cx="1103" cy="1029" r="3"/><circle cx="1151" cy="1029" r="3"/><circle cx="1199" cy="1029" r="3"/><circle cx="1247" cy="1029" r="3"/><circle cx="1303" cy="1029" r="3"/>
</g>
<rect x="1263" y="1010" width="2" height="68" fill="#6a6a6a"/>
<rect x="1365" y="1010" width="2" height="68" fill="#6a6a6a"/>
<circle cx="1332" cy="1044" r="1.900" fill="#222"/><circle cx="1339" cy="1044" r="1.900" fill="#222"/><circle cx="1346" cy="1044" r="1.900" fill="#222"/>

<path d="M1474 1048l7-7 7 7" fill="none" stroke="#222" stroke-width="2"/>
<path d="M1523 1051a5.500 5.500 0 0 1-1-10.900 7.500 7.500 0 0 1 14-1.500 6.300 6.300 0 0 1-.5 12.400Z" fill="url(#gCloud)" stroke="#333" stroke-width="1.400"/>
<text x="1569" y="1051.500" font-size="17" fill="#222" textLength="34" lengthAdjust="spacingAndGlyphs">ENG</text>
<path d="M1645 1033h-12a1.500 1.500 0 0 0-1.500 1.500v14a1.500 1.500 0 0 0 1.500 1.500h10M1638 1050v4M1633 1055h10" fill="none" stroke="#222" stroke-width="1.500"/>
<rect x="1647" y="1033" width="5" height="8" rx="2" fill="none" stroke="#222" stroke-width="1.500"/>
<path d="M1650 1041v14" stroke="#222" stroke-width="1.500"/>
<path d="M1668 1040v8h4.500l5.500 5v-18l-5.500 5Z" fill="none" stroke="#222" stroke-width="1.400" stroke-linejoin="round"/>
<path d="M1682 1040.500a5 5 0 0 1 0 7M1685 1037a10 10 0 0 1 0 14.500M1688 1034a14.500 14.500 0 0 1 0 20" fill="none" stroke="#222" stroke-width="1.400"/>
<rect x="1703.500" y="1036" width="26" height="15" rx="3.500" fill="#127a12" stroke="#111" stroke-width="1.500"/>
<path d="M1706 1038h5c1.500 2 2.500 2.500 3.500 2.500h4c1 0 2-.5 3.500-2.500h5v1h-21Z" fill="#eee"/>
<rect x="1731" y="1040" width="2" height="7" rx="1" fill="#111"/>
<path d="M1717.500 1032l-4 8.500h3l-1 6 4.500-8.500h-3Z" fill="#111" stroke="#eee" stroke-width=".8"/>
<text x="1738" y="1051.500" font-size="17" fill="#222" textLength="34" lengthAdjust="spacingAndGlyphs">99%</text>
<text x="1826" y="1038" font-size="17" fill="#222" textLength="64" lengthAdjust="spacingAndGlyphs">9:56 pm</text>
<text x="1798" y="1062" font-size="17" fill="#222" textLength="92" lengthAdjust="spacingAndGlyphs">08/04/2026</text>
</svg>
</body>
</html>
